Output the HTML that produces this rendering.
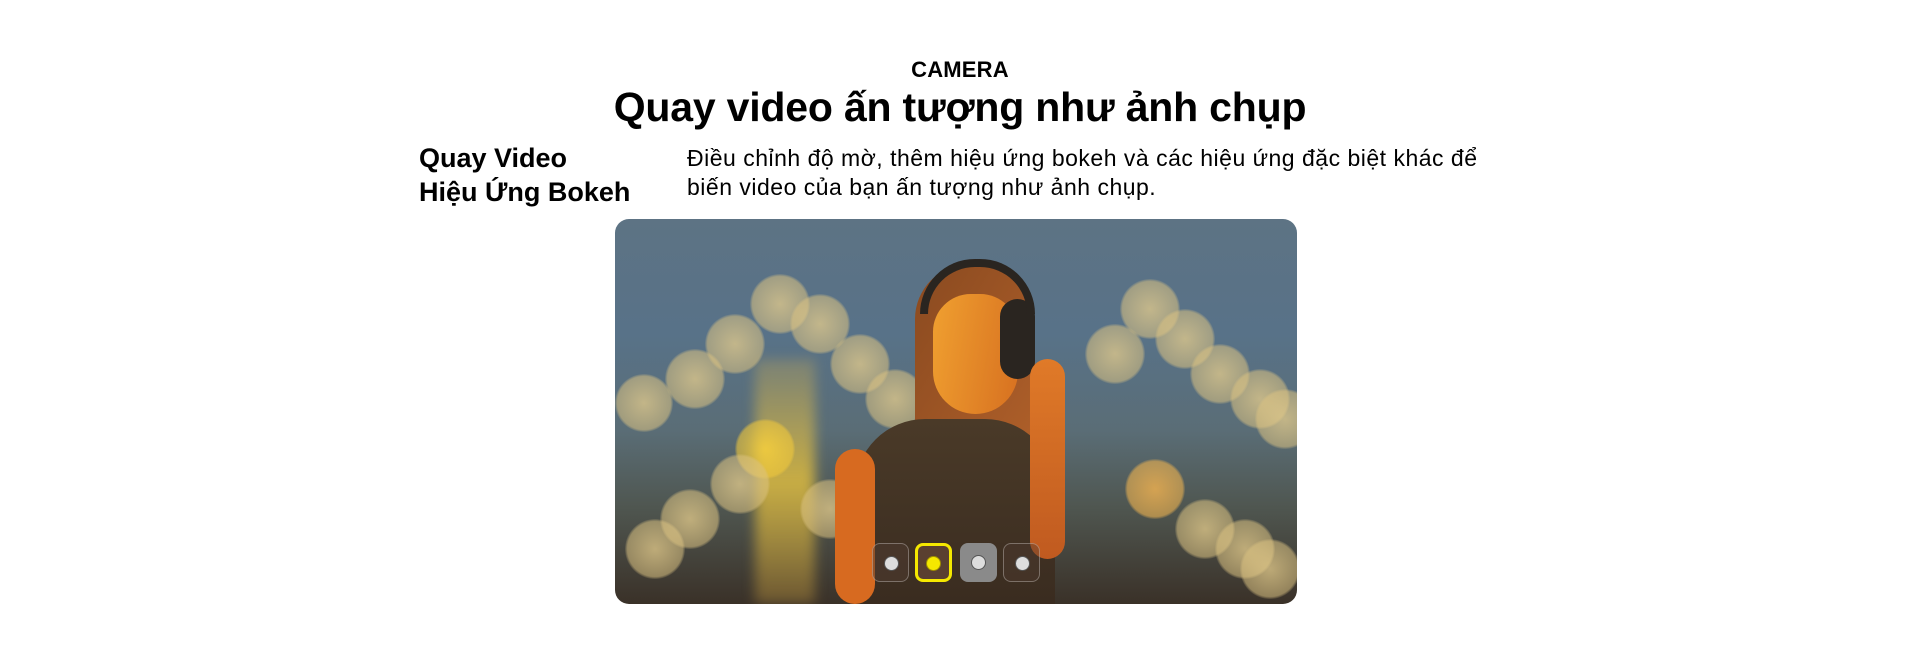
<!DOCTYPE html>
<html><head><meta charset="utf-8"><style>
*{margin:0;padding:0;box-sizing:border-box}
body{width:1920px;height:645px;background:#fff;font-family:"Liberation Sans",sans-serif;color:#000;position:relative;overflow:hidden}
.t{position:absolute;white-space:nowrap}
.img{position:absolute;left:615px;top:219px;width:682px;height:385px;border-radius:14px;overflow:hidden;
background:linear-gradient(180deg,#5d7384 0%,#587288 30%,#5a6d76 55%,#4f5650 75%,#3a3128 100%)}
.b{position:absolute;border-radius:50%;background:radial-gradient(circle,rgba(230,205,140,.75) 0%,rgba(220,195,130,.55) 65%,rgba(220,195,130,0) 72%)}
.btn{position:absolute;top:543px;width:37px;height:39px;border-radius:8px}
.dot{position:absolute;left:11px;top:12px;width:15px;height:15px;border-radius:50%;background:#ddd;border:1px solid #555}
</style></head><body>
<div class="t" style="left:0;width:1920px;text-align:center;top:57px;font-size:22px;font-weight:bold;letter-spacing:.2px">CAMERA</div>
<div class="t" style="left:0;width:1920px;text-align:center;top:84px;font-size:41px;font-weight:bold;letter-spacing:-.2px">Quay video ấn tượng như ảnh chụp</div>
<div class="t" style="left:419px;top:141px;font-size:27px;font-weight:bold;line-height:34px">Quay Video<br>Hiệu Ứng Bokeh</div>
<div class="t" style="left:687px;top:144px;font-size:23px;line-height:29px;letter-spacing:.5px">Điều chỉnh độ mờ, thêm hiệu ứng bokeh và các hiệu ứng đặc biệt khác để<br>biến video của bạn ấn tượng như ảnh chụp.</div>
<div class="img">
<div style="position:absolute;left:140px;top:140px;width:60px;height:245px;background:linear-gradient(180deg,rgba(200,170,90,.3),rgba(240,200,60,.75) 50%,rgba(180,140,60,.4));filter:blur(6px)"></div>
<div class="b" style="left:0;top:155px;width:58px;height:58px"></div>
<div class="b" style="left:50px;top:130px;width:60px;height:60px"></div>
<div class="b" style="left:90px;top:95px;width:60px;height:60px"></div>
<div class="b" style="left:135px;top:55px;width:60px;height:60px"></div>
<div class="b" style="left:175px;top:75px;width:60px;height:60px"></div>
<div class="b" style="left:215px;top:115px;width:60px;height:60px"></div>
<div class="b" style="left:250px;top:150px;width:60px;height:60px"></div>
<div class="b" style="left:120px;top:200px;width:60px;height:60px;background:radial-gradient(circle,rgba(250,210,60,.8) 0%,rgba(240,200,60,.6) 65%,transparent 72%)"></div>
<div class="b" style="left:10px;top:300px;width:60px;height:60px"></div>
<div class="b" style="left:45px;top:270px;width:60px;height:60px"></div>
<div class="b" style="left:95px;top:235px;width:60px;height:60px"></div>
<div class="b" style="left:185px;top:260px;width:60px;height:60px"></div>
<div class="b" style="left:470px;top:105px;width:60px;height:60px"></div>
<div class="b" style="left:505px;top:60px;width:60px;height:60px"></div>
<div class="b" style="left:540px;top:90px;width:60px;height:60px"></div>
<div class="b" style="left:575px;top:125px;width:60px;height:60px"></div>
<div class="b" style="left:615px;top:150px;width:60px;height:60px"></div>
<div class="b" style="left:640px;top:170px;width:60px;height:60px"></div>
<div class="b" style="left:510px;top:240px;width:60px;height:60px;background:radial-gradient(circle,rgba(245,180,80,.8) 0%,rgba(240,180,80,.6) 65%,transparent 72%)"></div>
<div class="b" style="left:560px;top:280px;width:60px;height:60px"></div>
<div class="b" style="left:600px;top:300px;width:60px;height:60px"></div>
<div class="b" style="left:625px;top:320px;width:60px;height:60px"></div>
<div style="position:absolute;left:300px;top:45px;width:120px;height:200px;border-radius:55px 60px 40px 40px;background:linear-gradient(120deg,#8a4a20,#b0602a)"></div>
<div style="position:absolute;left:318px;top:75px;width:85px;height:120px;border-radius:40px 40px 45px 45px;background:linear-gradient(100deg,#f0a030,#d77020)"></div>
<div style="position:absolute;left:385px;top:80px;width:35px;height:80px;border-radius:18px;background:#2a2520"></div>
<div style="position:absolute;left:305px;top:40px;width:115px;height:55px;border:8px solid #2a2520;border-bottom:none;border-radius:60px 60px 0 0"></div>
<div style="position:absolute;left:240px;top:200px;width:200px;height:185px;border-radius:70px 70px 0 0;background:linear-gradient(180deg,#4a3a28,#3a2c20)"></div>
<div style="position:absolute;left:220px;top:230px;width:40px;height:155px;border-radius:20px;background:#d76a20"></div>
<div style="position:absolute;left:415px;top:140px;width:35px;height:200px;border-radius:18px;background:linear-gradient(180deg,#e07a28,#c05a20)"></div>
</div>
<div class="btn" style="left:872px;background:rgba(80,60,50,.5);border:1px solid rgba(255,255,255,.3)"><div class="dot"></div></div>
<div class="btn" style="left:915px;background:#5a4030;border:3px solid #f5e800"><div class="dot" style="left:8px;top:10px;background:#f5e800;border-color:#a09000"></div></div>
<div class="btn" style="left:960px;background:#8a8a8a"><div class="dot"></div></div>
<div class="btn" style="left:1003px;background:rgba(80,60,50,.4);border:1px solid rgba(255,255,255,.3)"><div class="dot"></div></div>
</body></html>
